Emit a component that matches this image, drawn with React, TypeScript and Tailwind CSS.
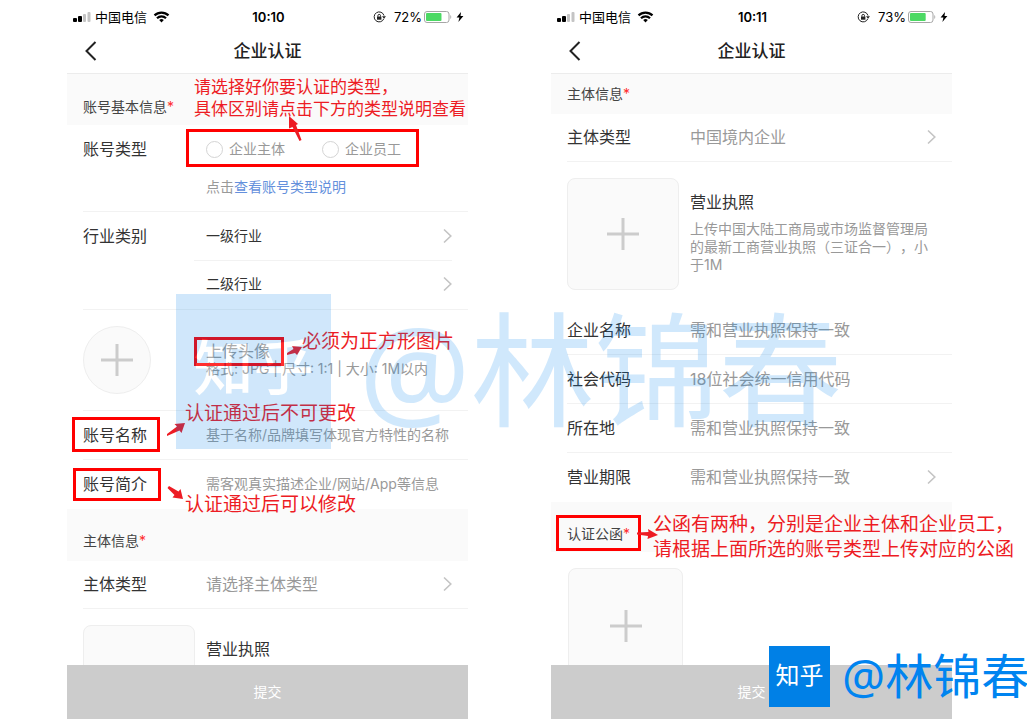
import type { ReactNode } from 'react'
import { clsx } from 'clsx'

function StatusBar({ time, battery }: { time: string; battery: number }) {
  return (
    <div className="flex h-8 items-center pl-1.5 pr-1 pt-0.5 text-[13px] leading-5 text-black">
      <div className="flex flex-1 items-center gap-1">
        <svg width="18" height="12" viewBox="0 0 18 12">
          <rect x="0" y="7" width="4" height="4" rx="1" fill="#000" />
          <rect x="5" y="5" width="4" height="6" rx="1" fill="#000" />
          <rect x="10" y="3" width="3" height="8" rx="1" fill="#c4c4c4" />
          <rect x="14.500" y="1" width="3" height="10" rx="1" fill="#c4c4c4" />
        </svg>
        <span>中国电信</span>
        <svg width="17" height="12" viewBox="0 0 17 12" className="ml-0.5" fill="none" stroke="#000" strokeWidth="2.200">
          <path d="M1.500 4.400a10 10 0 0 1 14 0" />
          <path d="M4 7.200a6.400 6.400 0 0 1 9 0" />
          <path d="M8.500 11.500 6.200 9.100a3.300 3.300 0 0 1 4.600 0z" fill="#000" stroke="none" />
        </svg>
      </div>
      <span className="font-semibold">{time}</span>
      <div className="flex flex-1 items-center justify-end gap-1">
        <svg width="13" height="12" viewBox="0 0 13 12" className="mr-1" fill="none" stroke="#222">
          <path d="M10.800 7.800a5 5 0 1 1 .2-3.200" />
          <path d="M9 5.200h4L11 7.800z" fill="#222" stroke="none" />
          <rect x="4" y="5.500" width="4.400" height="3.200" fill="#222" stroke="none" />
          <path d="M4.900 5.600V4.700a1.300 1.300 0 0 1 2.600 0v.9" />
        </svg>
        <div className="flex items-center gap-0.5">
          <span>{battery}%</span>
          <svg width="28" height="12" viewBox="0 0 28 12">
            <rect x="0.500" y="0.500" width="24.500" height="11" rx="2.500" fill="#fff" stroke="#a6a6a6" />
            <rect x="2" y="2" width={(21.5 * battery) / 100} height="8" rx="1" fill="#4cd964" />
            <path d="M26.300 4v4c1.300-.7 1.300-3.300 0-4z" fill="#a6a6a6" />
          </svg>
        </div>
        <svg width="8" height="10" viewBox="0 0 8 10">
          <path d="M5 0 .6 5.600h2.800L2.400 10 7.400 4H4.500z" fill="#000" />
        </svg>
      </div>
    </div>
  )
}

function NavBar() {
  return (
    <header className="grid h-[42px] grid-cols-[1fr_auto_1fr] items-center border-b border-[#ececec] px-4 pb-1">
      <button type="button" aria-label="返回" className="justify-self-start">
        <svg width="16" height="22" viewBox="0 0 16 22" fill="none" stroke="#222" strokeWidth="2">
          <path d="M12.500 2 3.500 11l9 9" />
        </svg>
      </button>
      <h1 className="text-[17px] font-medium leading-6 text-[#222]">企业认证</h1>
    </header>
  )
}

function SectionTitle({ children, className }: { children: ReactNode; className: string }) {
  return (
    <h2 className={clsx('bg-[#fafafa] px-4 text-sm leading-5 text-[#444]', className)}>
      {children}
      <span className="text-[#ff2d2d]">*</span>
    </h2>
  )
}

function Chevron() {
  return (
    <svg width="9" height="16" viewBox="0 0 9 16" fill="none" stroke="#c4c4c4" strokeWidth="1.600" className="pointer-events-none shrink-0">
      <path d="M1 1.500 7.800 8 1 14.500" />
    </svg>
  )
}

function Plus() {
  return (
    <svg width="32" height="32" viewBox="0 0 32 32" stroke="#ccc" strokeWidth="3">
      <path d="M16 0v32M0 16h32" />
    </svg>
  )
}

const rowClass = 'ml-4 flex items-center border-b pr-4 text-base leading-6'

function SelectRow({ id, label, value, last }: { id: string; label: string; value: string; last?: boolean }) {
  return (
    <div className={clsx(rowClass, last ? 'h-[49px] border-transparent' : 'h-12 border-[#f2f2f2] pb-0.5')}>
      <label htmlFor={id} className="w-[111px] shrink-0 text-[#333]">{label}</label>
      <div className="flex min-w-0 flex-1 items-center pl-3">
        <select id={id} className="min-w-0 flex-1 appearance-none text-[#999]">
          <option>{value}</option>
        </select>
        <Chevron />
      </div>
    </div>
  )
}

function InputRow({ id, label, placeholder, small, last }: { id: string; label: string; placeholder: string; small?: boolean; last?: boolean }) {
  return (
    <div className={clsx(rowClass, 'h-[49px]', last ? 'border-transparent' : 'border-[#f2f2f2]')}>
      <label htmlFor={id} className="w-[111px] shrink-0 text-[#333]">{label}</label>
      <div className="flex min-w-0 flex-1 pl-3">
        <input id={id} placeholder={placeholder} className={clsx('min-w-0 flex-1 placeholder:text-[#999]', small && 'text-sm')} />
      </div>
    </div>
  )
}

function IndustrySelect({ value, className }: { value: string; className?: string }) {
  return (
    <div className={clsx('flex items-center pl-3', className)}>
      <select aria-label={value} className="min-w-0 flex-1 appearance-none text-sm text-[#333]">
        <option>{value}</option>
      </select>
      <Chevron />
    </div>
  )
}

function LicenseUpload() {
  return (
    <div className="flex gap-[11px] p-4">
      <button type="button" aria-label="上传营业执照" className="flex size-28 shrink-0 items-center justify-center rounded-lg border border-[#eee] bg-[#fafafa]">
        <Plus />
      </button>
      <div className="pt-3">
        <h3 className="text-base leading-6 text-[#333]">营业执照</h3>
        <p className="mt-1.5 text-sm leading-[18px] text-[#999] [text-spacing-trim:space-all]">
          上传中国大陆工商局或市场监督管理局的最新工商营业执照（三证合一），小于1M
        </p>
      </div>
    </div>
  )
}

function Phone({ time, battery, children, notes }: { time: string; battery: number; children: ReactNode; notes: ReactNode }) {
  return (
    <section className="relative flex min-w-0 flex-1 flex-col">
      <StatusBar time={time} battery={battery} />
      <NavBar />
      <form className="min-h-0 flex-1 overflow-hidden">{children}</form>
      <button type="button" className="h-[54px] shrink-0 bg-[#ccc] text-sm text-white">
        提交
      </button>
      {notes}
    </section>
  )
}

function Frame({ className }: { className: string }) {
  return <div className={clsx('pointer-events-none absolute border-3 border-[#ff0000]', className)} />
}

function Note({ className, children }: { className: string; children: ReactNode }) {
  return <p className={clsx('absolute whitespace-nowrap text-[#ed1c24]', className)}>{children}</p>
}

function Arrow({ className, points }: { className: string; points: string }) {
  return (
    <svg width="24" height="28" viewBox="0 0 24 28" className={clsx('pointer-events-none absolute', className)}>
      <polygon points={points} fill="#ed1c24" />
    </svg>
  )
}

function AccountNotes() {
  return (
    <>
      <Frame className="left-[119px] top-[129px] h-[38px] w-[233px]" />
      <Frame className="left-[127px] top-[337px] h-[29px] w-[90px]" />
      <Frame className="left-[5px] top-[417px] h-[35px] w-[88px]" />
      <Frame className="left-[6px] top-[468px] h-[33px] w-[88px]" />
      <Note className="left-[127px] top-[76px] text-[17px] leading-[22px]">
        请选择好你要认证的类型，
        <br />
        具体区别请点击下方的类型说明查看
      </Note>
      <Note className="left-[235px] top-[330px] text-[19px] leading-6">必须为正方形图片</Note>
      <Note className="left-[118px] top-[402px] text-[19px] leading-6">认证通过后不可更改</Note>
      <Note className="left-[118px] top-[493px] text-[19px] leading-6">认证通过后可以修改</Note>
      <Arrow className="left-[219px] top-[114px]" points="3,2 12,10 10,11 15.500,26 13.500,27 6.500,13 3,14.500" />
      <Arrow className="left-[218px] top-[340px]" points="17,7 7,6 8.500,9 2,13 2,15 10,13 12,15" />
      <Arrow className="left-[98px] top-[418px]" points="20,5 9.500,6 12,8.500 2,16 2,18 14.500,12.500 16.500,15" />
      <Arrow className="left-[98px] top-[482px]" points="18,17 15.500,7 13.500,9.500 4,4 2.500,6 9.500,13 7.500,15.500" />
    </>
  )
}

function LetterNotes() {
  return (
    <>
      <Frame className="left-[5px] top-[515px] h-9 w-[85px]" />
      <Note className="left-[102px] top-[512px] text-[19px] leading-[25px]">
        公函有两种，分别是企业主体和企业员工，
        <br />
        请根据上面所选的账号类型上传对应的公函
      </Note>
      <Arrow className="left-[85px] top-[520px]" points="22,15 12,9 12.500,12 1,12.500 1,14.500 12,16 11.500,19" />
    </>
  )
}

export default function App() {
  return (
    <main className="relative flex h-screen gap-[83px] overflow-hidden bg-white pb-[3px] pl-[67px] pr-[75px] font-[Inter,'Noto_Sans_CJK_SC',sans-serif]">
      <Phone time="10:10" battery={72} notes={<AccountNotes />}>
        <SectionTitle className="pb-2 pt-[23px]">账号基本信息</SectionTitle>

        <fieldset className="ml-4 flex h-[87px] border-b border-[#f2f2f2] pt-3">
          <span className="w-[111px] text-base leading-6 text-[#333]">账号类型</span>
          <div className="flex flex-1 flex-col gap-4 pl-3 text-sm leading-6 text-[#999]">
            <div className="flex gap-[37px]">
              <label className="flex items-center gap-1.5">
                <input type="radio" name="account" className="size-[17px] appearance-none rounded-full border border-[#d4d4d4]" />
                企业主体
              </label>
              <label className="flex items-center gap-1.5">
                <input type="radio" name="account" className="size-[17px] appearance-none rounded-full border border-[#d4d4d4]" />
                企业员工
              </label>
            </div>
            <p className="leading-5">
              点击<a href="#types" className="text-[#6490dc]">查看账号类型说明</a>
            </p>
          </div>
        </fieldset>

        <div className="ml-4 flex border-b border-[#f2f2f2] pr-4">
          <span className="w-[111px] pt-3 text-base leading-6 text-[#333]">行业类别</span>
          <div className="flex-1 leading-6">
            <IndustrySelect value="一级行业" className="h-[49px] border-b border-[#f2f2f2]" />
            <IndustrySelect value="二级行业" className="h-12 pb-0.5" />
          </div>
        </div>

        <div className="ml-4 flex h-[101px] items-center border-b border-[#f2f2f2]">
          <div className="w-[111px]">
            <button type="button" aria-label="上传头像" className="flex size-[68px] items-center justify-center rounded-full border border-[#eee] bg-[#fafafa]">
              <Plus />
            </button>
          </div>
          <div className="pb-0.5 pl-3 text-[#999]">
            <p className="text-base leading-5">上传头像</p>
            <p className="text-sm leading-4">格式: JPG | 尺寸: 1:1 | 大小: 1M以内</p>
          </div>
        </div>

        <InputRow id="name" label="账号名称" placeholder="基于名称/品牌填写体现官方特性的名称" small />
        <InputRow id="intro" label="账号简介" placeholder="需客观真实描述企业/网站/App等信息" small last />
        <SectionTitle className="pb-2.5 pt-[22px]">主体信息</SectionTitle>
        <SelectRow id="subject" label="主体类型" value="请选择主体类型" />
        <LicenseUpload />
      </Phone>

      <Phone time="10:11" battery={73} notes={<LetterNotes />}>
        <SectionTitle className="py-2.5">主体信息</SectionTitle>
        <SelectRow id="subject-2" label="主体类型" value="中国境内企业" />
        <LicenseUpload />
        <InputRow id="company" label="企业名称" placeholder="需和营业执照保持一致" />
        <InputRow id="code" label="社会代码" placeholder="18位社会统一信用代码" />
        <InputRow id="place" label="所在地" placeholder="需和营业执照保持一致" />
        <SelectRow id="period" label="营业期限" value="需和营业执照保持一致" last />
        <SectionTitle className="pb-2 pt-[22px]">认证公函</SectionTitle>
        <div className="px-[17px] py-4">
          <button type="button" aria-label="上传认证公函" className="flex size-[115px] items-center justify-center rounded-lg border border-[#eee] bg-[#fafafa]">
            <Plus />
          </button>
        </div>
      </Phone>

      {/* Watermark */}
      <div className="pointer-events-none absolute left-44 top-[294px] flex gap-7 whitespace-nowrap font-['Noto_Sans','Noto_Sans_CJK_SC',sans-serif] opacity-18">
        <span className="flex size-[155px] items-center justify-center bg-[#0080ea] pb-2.5 text-[60px] font-medium leading-none text-white">知乎</span>
        <span className="text-[124px] leading-[150px] text-[#0084f0]">@林锦春</span>
      </div>

      {/* Author badge */}
      <div className="pointer-events-none absolute left-[769px] top-[646px] flex gap-3 whitespace-nowrap font-['Noto_Sans','Noto_Sans_CJK_SC',sans-serif]">
        <span className="flex size-[61px] items-center justify-center bg-[#0080e6] pb-1 text-2xl leading-none text-white">知乎</span>
        <span className="text-5xl leading-[60px] text-[#0084f0]">@林锦春</span>
      </div>
    </main>
  )
}
